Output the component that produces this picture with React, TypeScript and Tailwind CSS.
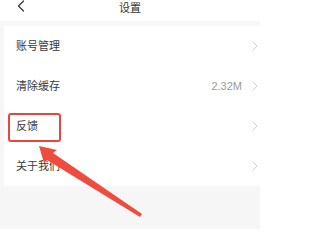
import React from "react";

const Chevron = () => (
  <svg width="6" height="10" viewBox="0 0 6 10" className="shrink-0">
    <path d="M1 1 L5 5 L1 9" fill="none" stroke="#cfcfcf" strokeWidth="1" strokeLinecap="round" strokeLinejoin="round" />
  </svg>
);

const Row = ({ label, value }: { label: string; value?: string }) => (
  <div className="flex h-[40px] items-center pl-3 pr-[2px]">
    <span className="flex-1 text-[11px] text-[#3a3a3a]">{label}</span>
    {value && <span className="mr-[10px] text-[11px] text-[#9a9a9a]">{value}</span>}
    <Chevron />
  </div>
);

export default function App() {
  return (
    <div
      className="relative h-[229px] w-[260px] overflow-hidden bg-[#f6f6f6]"
      style={{ fontFamily: '"Liberation Sans", "Noto Sans CJK SC", sans-serif' }}
    >
      <div className="relative flex h-[21px] items-center justify-center bg-white">
        <svg width="8" height="12" viewBox="0 0 8 12" className="absolute left-[17px] top-[0px]">
          <path d="M6.5 1 L1.5 6 L6.5 11" fill="none" stroke="#333" strokeWidth="1.2" strokeLinecap="round" strokeLinejoin="round" />
        </svg>
        <span className="-mt-[5px] text-[11px] text-[#333333]">设置</span>
      </div>
      <div className="h-[5px] bg-[#f8f8f8]" />
      <div className="ml-1 bg-white">
        <Row label="账号管理" />
        <Row label="清除缓存" value="2.32M" />
        <Row label="反馈" />
        <Row label="关于我们" />
      </div>

      <div className="absolute left-[8px] top-[113px] h-[29px] w-[53px] rounded-[3px] border-2 border-[#e8453c]" />
      <svg className="absolute left-0 top-0" width="260" height="229" viewBox="0 0 260 229">
        <polygon
          points="39,146 57,150 53,153 142,214 140,217 47,160 44,163"
          fill="#f04b3f"
        />
      </svg>
    </div>
  );
}
